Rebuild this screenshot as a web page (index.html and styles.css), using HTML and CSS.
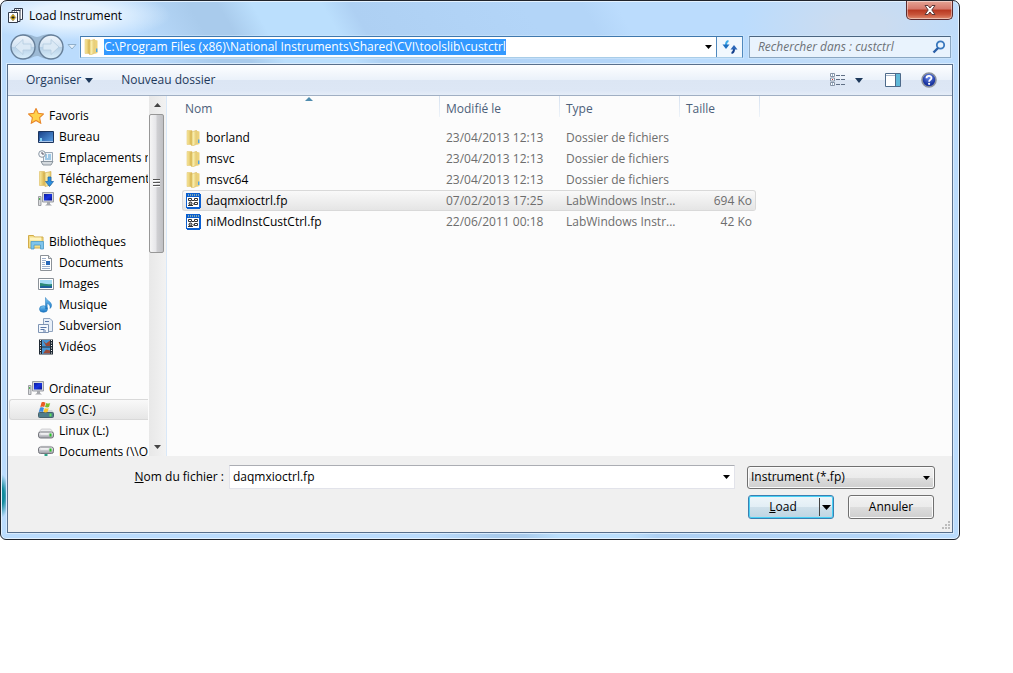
FILE: index.html
```html
<!DOCTYPE html>
<html lang="fr">
<head>
<meta charset="utf-8">
<title>Load Instrument</title>
<link rel="stylesheet" href="styles.css">
</head>
<body>
<svg class="defs" aria-hidden="true">
  <defs>
    <linearGradient id="g-gold" x1="0" x2="1"><stop offset="0" stop-color="#f8eaa0"/><stop offset="1" stop-color="#d8b24a"/></linearGradient>
    <linearGradient id="g-gold2" x1="0" x2="1"><stop offset="0" stop-color="#d9b550"/><stop offset=".4" stop-color="#f9efb0"/><stop offset="1" stop-color="#e5c768"/></linearGradient>
    <linearGradient id="g-screen" x1="0" x2="1" y2="1"><stop offset="0" stop-color="#0a1a9c"/><stop offset=".5" stop-color="#1a35e0"/><stop offset="1" stop-color="#0c1690"/></linearGradient>
    <linearGradient id="g-desk" x1="0" x2="1" y2="1"><stop offset="0" stop-color="#173f86"/><stop offset="1" stop-color="#5aa0e6"/></linearGradient>
    <linearGradient id="g-blue" x1="0" x2="0" y2="1"><stop offset="0" stop-color="#7cc8f4"/><stop offset="1" stop-color="#1673c4"/></linearGradient>
    <linearGradient id="g-drive" x1="0" x2="0" y2="1"><stop offset="0" stop-color="#f6f6f8"/><stop offset="1" stop-color="#9b9ca4"/></linearGradient>
    <linearGradient id="g-orb" x1="0" x2="0" y2="1"><stop offset="0" stop-color="#f0f6fc"/><stop offset=".48" stop-color="#d3e3f2"/><stop offset=".5" stop-color="#b5cfe6"/><stop offset="1" stop-color="#dcf0fc"/></linearGradient>
    <radialGradient id="g-help" cy=".3"><stop offset="0" stop-color="#6c8cf0"/><stop offset="1" stop-color="#1a35a0"/></radialGradient>
    <symbol id="i-folder" viewBox="0 0 16 16">
      <path d="M2 .5h5v14H2z" fill="url(#g-gold)" stroke="#e6cb78" stroke-width=".6"/>
      <path d="M6 2.200L11.500.300v14L7.500 16 6 15z" fill="url(#g-gold2)" stroke="#d3b050" stroke-width=".5"/>
      <path d="M11.500.8l3 .7v12.500l-3 1z" fill="#ecd27a"/><path d="M13.700 9.500v3.500" stroke="#4fa4e4" stroke-width="1.400"/>
    </symbol>
    <symbol id="i-fp" viewBox="0 0 16 16">
      <path d="M1 0h14v1h1v14h-1v1H2v-1H1z" fill="#0b5fd0"/><path d="M2 4h12v10H2z" fill="#fff"/>
      <path d="M3 2h11" stroke="#f8f090" stroke-dasharray="1 1"/>
      <path d="M3.500 5.500h3v2h-3zM9.500 5.500h3v2h-3zM9.500 9.500h3v2h-3z" fill="#fff" stroke="#333"/><circle cx="5.500" cy="10.500" r="1.500" fill="#aaa" stroke="#222"/><path d="M3 12.500h5M7 7.500h2M8 11h2" stroke="#333"/>
    </symbol>
    <symbol id="i-pc" viewBox="0 0 16 16">
      <path d="M4.500.5h11v9.500h-11z" fill="#d6d8dc" stroke="#9a9da4"/><path d="M6 2h8v6.500H6z" fill="url(#g-screen)"/>
      <path d="M9 10h3v2l2 1.500H7L9 12z" fill="#a5a7ac"/><path d="M.5 4.500h2.500v9H.5z" fill="#d8dadd" stroke="#8b8d92" stroke-width=".8"/><path d="M1.700 6v2" stroke="#37a537"/>
    </symbol>
    <symbol id="i-drive" viewBox="0 0 16 16">
      <path d="M3.500 6h9l3 3.500H.5z" fill="#ececee" stroke="#b5b5ba" stroke-width=".6"/><rect x=".5" y="9" width="15" height="6" rx="2" fill="url(#g-drive)" stroke="#77787f"/><path d="M2.500 11h8" stroke="#fff"/><path d="M12.500 10.500v3" stroke="#27c427" stroke-width="2"/>
    </symbol>
  </defs>
</svg>

<main class="window">
  <header class="titlebar">
    <svg class="icon" viewBox="0 0 16 16"><path d="M6.500.5h8v11h-8z" fill="#fff" stroke="#333c4c"/><path d="M4 2.500h8v11H4z" fill="#fff" stroke="#333c4c"/><path d="M6 4h4M8 2h5" stroke="#445" stroke-dasharray="1 1"/><path d="M.5 4.500h9v10h-9z" fill="#fff" stroke="#333c4c"/><path d="M5 6l2.800 3.500L5 13 2.200 9.500z" fill="#e8b400" stroke="#777" stroke-width=".6"/><path d="M5 8v3M3.500 9.500h3" stroke="#222"/></svg>
    <h1>Load Instrument</h1>
    <button class="close" aria-label="Fermer"><svg width="12" height="10" viewBox="0 0 12 10"><path d="M1 .5h3L6 3 8 .5h3L7.800 5 11 9.500H8L6 7 4 9.500H1L4.200 5z" fill="#fff" stroke="#5a3a3a"/></svg></button>
  </header>

  <nav class="address-row" aria-label="Navigation">
    <div class="travel">
      <svg width="56" height="28" viewBox="0 0 56 28"><path d="M13 1.500C22 .5 24 4 28 4S34 .5 43 1.500v24C34 27 32 23 28 23s-6 4-15 3z" fill="#9cb9d4"/><g fill="url(#g-orb)" stroke="#667f99" stroke-width="1.400"><circle cx="14" cy="14" r="12"/><circle cx="42" cy="14" r="12"/></g><path d="M14 6.500L6 14l8 7.500v-4.500h8v-6h-8zM42 6.500l8 7.500-8 7.500v-4.500h-8v-6h8z" fill="#dbe9f5" stroke="#b4cbe0" stroke-width=".8"/></svg>
      <svg width="10" height="6" viewBox="0 0 10 6"><path d="M1 .5h8L5 5z" fill="#e3f0fb" stroke="#8fafcb"/></svg>
    </div>
    <div class="address">
      <svg class="icon"><use href="#i-folder"/></svg>
      <input id="path" aria-label="Adresse" value="C:\Program Files (x86)\National Instruments\Shared\CVI\toolslib\custctrl" spellcheck="false">
      <button class="drop" aria-label="Emplacements précédents"><svg width="7" height="4" viewBox="0 0 7 4"><path d="M0 0h7L3.500 4z"/></svg></button>
      <button class="refresh" aria-label="Actualiser"><svg width="16" height="14" viewBox="0 0 16 14"><path d="M6.500 1C4.200 1.200 4 3 4 5" fill="none" stroke="#38a9e8" stroke-width="2"/><path d="M.5 4.500h7L4 9z" fill="#1d6fc0"/><path d="M9.500 13c2.300-.2 2.500-2 2.500-4" fill="none" stroke="#123f8c" stroke-width="2"/><path d="M8.500 9.500h7L12 5z" fill="#2a66b8"/></svg></button>
    </div>
    <div class="search">
      <input type="text" aria-label="Rechercher" placeholder="Rechercher dans : custctrl">
      <svg width="14" height="14" viewBox="0 0 14 14"><circle cx="8.500" cy="5" r="3.700" fill="#eaf4fd" stroke="#3a78bd" stroke-width="1.800"/><path d="M6 8l-4.500 4.500" stroke="#2a5fa8" stroke-width="2.400"/></svg>
    </div>
  </nav>

  <section class="client">
    <div class="toolbar">
      <button>Organiser <svg width="8" height="5" viewBox="0 0 8 5"><path d="M0 0h8L4 5z" fill="#1e395b"/></svg></button>
      <button>Nouveau dossier</button>
      <button class="view" aria-label="Affichage"><svg width="16" height="14" viewBox="0 0 16 14"><path d="M.5.5h4v3h-4zM.5 5h4v3h-4zM.5 9.500h4v3h-4z" fill="#fff" stroke="#8593a5"/><path d="M2 2h1M2 11h1" stroke="#34689c"/><path d="M2 6.500h1" stroke="#c33"/><path d="M6 2.500h4m1 0h4M6 6.500h4m1 0h4M6 11.500h4m1 0h4" stroke="#5f6f85"/></svg><svg width="8" height="5" viewBox="0 0 8 5"><path d="M0 0h8L4 5z" fill="#1e395b"/></svg></button>
      <button aria-label="Volet de visualisation"><svg width="16" height="14" viewBox="0 0 16 14"><path d="M.5.500h15v13H.5z" fill="#fff" stroke="#4d6a8a"/><path d="M11 1h4v12h-4z" fill="#5fb8d8"/><path d="M1 2.500h9" stroke="#a8b8cc"/><path d="M10.500 1v12" stroke="#4d6a8a"/></svg></button>
      <button class="help" aria-label="Aide"><svg width="16" height="16" viewBox="0 0 16 16"><circle cx="8" cy="8" r="7" fill="url(#g-help)" stroke="#8c929c" stroke-width="1.600"/><path d="M5.500 6.300C5.500 3.200 10.500 3.200 10.500 6c0 2-2.400 1.700-2.400 3.800" fill="none" stroke="#fff" stroke-width="1.800"/><circle cx="8.100" cy="11.800" r="1.100" fill="#fff"/></svg></button>
    </div>

    <div class="panes">
      <ul class="tree">
        <li><svg class="icon" viewBox="0 0 16 16"><path d="M8 .6l2.200 4.700 5.300.7-3.900 3.700 1.100 5.500L8 12.500l-4.700 2.700 1.100-5.500L.5 6l5.300-.7z" fill="#ffd24a" stroke="#e8862a" stroke-width="1.100"/></svg>Favoris</li>
        <li class="sub"><svg class="icon" viewBox="0 0 16 16"><path d="M.5 2.500h15v11H.5z" fill="url(#g-desk)" stroke="#1c355e"/><path d="M1 12.500h14" stroke="#a9c6ea"/><path d="M2 9h2v3H2z" fill="#7fd0f5"/></svg>Bureau</li>
        <li class="sub"><svg class="icon" viewBox="0 0 16 16"><path d="M5.500 2.500h9v9h-9z" fill="#eef3f8" stroke="#9aa7b4"/><path d="M7 5h2m1 0h3M7 7h2m1 0h3M7 9h6" stroke="#4c9bd2"/><path d="M3 11.500h12l-2 3.500H5z" fill="#d5dade" stroke="#8b959e"/><circle cx="4" cy="4" r="3.300" fill="#f6f8fa" stroke="#8b98a5"/><path d="M4 2v2h2" fill="none" stroke="#556"/></svg>Emplacements récents</li>
        <li class="sub"><svg class="icon" viewBox="0 0 16 16"><path d="M1.500.5h5v14h-5z" fill="url(#g-gold)" stroke="#dcbb5d" stroke-width=".6"/><path d="M6 2l7-1.500v13.500l-6 1.500z" fill="url(#g-gold2)" stroke="#cda847" stroke-width=".6"/><path d="M10 6h3v4.500h2.500l-4 5-4-5H10z" fill="#2e90e0" stroke="#1762a8" stroke-width=".7"/></svg>Téléchargements</li>
        <li class="sub"><svg class="icon"><use href="#i-pc"/></svg>QSR-2000</li>
        <li class="gap"><svg class="icon" viewBox="0 0 16 16"><path d="M.5 1.500h5l1 1.500h8.500v11H.5z" fill="#f2dc86" stroke="#d2ac4a"/><path d="M2 3.500h11v3H2z" fill="#fff4c0"/><path d="M3 7.500h12.500v7.500h-3v-4H6v4H3z" fill="#7ec4ec" stroke="#4a9bcc" stroke-width=".8"/></svg>Bibliothèques</li>
        <li class="sub"><svg class="icon" viewBox="0 0 16 16"><path d="M2.500.5h8l3 3v12h-11z" fill="#fff" stroke="#8c9298"/><path d="M10.500.5v3h3" fill="#e5e8ea" stroke="#8c9298"/><path d="M4 3.500h4M4 5.500h4M4 7.500h3M4 9.500h3M4 11.500h8M4 13.500h8" stroke="#9db0cc"/><path d="M8 6h4v4H8z" fill="#2868b8"/></svg>Documents</li>
        <li class="sub"><svg class="icon" viewBox="0 0 16 16"><path d="M.5 2.500h15v11H.5z" fill="#fff" stroke="#8a9198"/><path d="M2 4h12v8H2z" fill="#a5dcf5"/><path d="M2 7c4 0 6 2 12 1v4H2z" fill="#2b8a76"/><path d="M2 10.500c4-1 8 0 12-.5v2H2z" fill="#1d5f9c"/></svg>Images</li>
        <li class="sub"><svg class="icon" viewBox="0 0 16 16"><ellipse cx="5.500" cy="12" rx="4" ry="3.300" fill="url(#g-blue)" stroke="#2479bb" stroke-width=".6"/><path d="M7.500 12V.5c1 3 5.500 4 6 7 .3 2-.5 3-1.500 4 .5-3-1-4.500-2.800-5.200V12z" fill="url(#g-blue)" stroke="#2479bb" stroke-width=".5"/></svg>Musique</li>
        <li class="sub"><svg class="icon" viewBox="0 0 16 16"><path d="M5.500.5h6.500l2.500 2.500v10.500h-9z" fill="#e8eff8" stroke="#8fa3be"/><path d="M.5 6.500h10v8H.5z" fill="#f4f8fd" stroke="#7e94b4"/><path d="M2.500 9.500h6M2.500 11.500h4M5 13h3M7 3.500h4" stroke="#5876a8"/></svg>Subversion</li>
        <li class="sub"><svg class="icon" viewBox="0 0 16 16"><path d="M1 .5h14v15H1z" fill="#202a34"/><path d="M4 1h8v6.500H4zM4 8.500h8V15H4z" fill="#4796d4"/><path d="M5 1.500l3 3 4-3v5.500H8zM5 14.500l3-4 4 1v3z" fill="#9a4a38"/><path d="M2.500 1v14M13.500 1v14" stroke="#fff" stroke-dasharray="1 1.500"/></svg>Vidéos</li>
        <li class="gap"><svg class="icon"><use href="#i-pc"/></svg>Ordinateur</li>
        <li class="sub current"><svg class="icon" viewBox="0 0 16 16"><path d="M2 8h12l2 3H0z" fill="#cfd6da"/><rect x=".5" y="10.500" width="15" height="5" rx="1" fill="#4f7d8a" stroke="#46616c"/><path d="M12.500 11.500v3" stroke="#5de25d" stroke-width="2"/><path d="M3.500.5c2-1 3 0 4 .3L6.300 5c-1-.5-2-1-4 0z" fill="#ea5a24"/><path d="M8.200 1c1.500.8 2.500.6 4 0L11 5c-1.500.7-2.500.5-4 0z" fill="#7cbc2c"/><path d="M2 5.700c2-1 3 0 4 .3L4.800 10c-1-.5-2-1-4 0z" fill="#3b8be0"/><path d="M6.800 6c1.500.8 2.500.6 4 0L9.500 10c-1.500.7-2.500.5-4 0z" fill="#fbc52c"/></svg>OS (C:)</li>
        <li class="sub"><svg class="icon"><use href="#i-drive"/></svg>Linux (L:)</li>
        <li class="sub"><svg class="icon" viewBox="0 0 16 16"><path d="M3.500 1.500h9l3 2.500H.5z" fill="#ececee"/><rect x=".5" y="3" width="15" height="6.500" rx="2" fill="url(#g-drive)" stroke="#77787f"/><path d="M2.500 5h8" stroke="#fff"/><path d="M12.500 4.500v3" stroke="#27c427" stroke-width="2"/><path d="M8 10v4M2 14h12" stroke="#2da086" stroke-width="3"/></svg>Documents (\\OSR)</li>
      </ul>
      <div class="scrollbar" aria-hidden="true">
        <svg width="7" height="4" viewBox="0 0 7 4"><path d="M0 4h7L3.500 0z" fill="#444"/></svg>
        <div class="track"><div class="thumb"><i></i></div></div>
        <svg width="7" height="4" viewBox="0 0 7 4"><path d="M0 0h7L3.500 4z" fill="#444"/></svg>
      </div>
      <div class="files">
        <svg class="sort" width="8" height="4" viewBox="0 0 8 4"><path d="M0 4h8L4 0z" fill="#4f8cae"/></svg>
        <table>
          <colgroup><col class="c-name"><col class="c-date"><col class="c-type"><col class="c-size"></colgroup>
          <thead><tr><th>Nom</th><th>Modifié le</th><th>Type</th><th>Taille</th></tr></thead>
          <tbody>
            <tr><td><span class="file"><svg class="icon"><use href="#i-folder"/></svg>borland</span></td><td>23/04/2013 12:13</td><td>Dossier de fichiers</td><td></td></tr>
            <tr><td><span class="file"><svg class="icon"><use href="#i-folder"/></svg>msvc</span></td><td>23/04/2013 12:13</td><td>Dossier de fichiers</td><td></td></tr>
            <tr><td><span class="file"><svg class="icon"><use href="#i-folder"/></svg>msvc64</span></td><td>23/04/2013 12:13</td><td>Dossier de fichiers</td><td></td></tr>
            <tr class="selected"><td><span class="file"><svg class="icon"><use href="#i-fp"/></svg>daqmxioctrl.fp</span></td><td>07/02/2013 17:25</td><td>LabWindows Instr...</td><td>694 Ko</td></tr>
            <tr><td><span class="file"><svg class="icon"><use href="#i-fp"/></svg>niModInstCustCtrl.fp</span></td><td>22/06/2011 00:18</td><td>LabWindows Instr...</td><td>42 Ko</td></tr>
          </tbody>
        </table>
      </div>
    </div>

    <footer class="footer">
      <div class="fields">
        <label for="filename"><u>N</u>om du fichier :</label>
        <div class="combo">
          <input id="filename" value="daqmxioctrl.fp" spellcheck="false">
          <button class="drop" aria-label="Fichiers récents"><svg width="7" height="4" viewBox="0 0 7 4"><path d="M0 0h7L3.500 4z"/></svg></button>
        </div>
        <div class="filter">
          <select aria-label="Type de fichier"><option>Instrument (*.fp)</option></select>
          <svg width="7" height="4" viewBox="0 0 7 4"><path d="M0 0h7L3.500 4z"/></svg>
        </div>
      </div>
      <div class="actions">
        <div class="split">
          <button class="load"><span><u>L</u>oad</span></button>
          <button class="more" aria-label="Autres options"><svg width="9" height="5" viewBox="0 0 9 5"><path d="M0 0h9L4.500 5z"/></svg></button>
        </div>
        <button class="cancel">Annuler</button>
      </div>
      <svg class="grip" width="9" height="9" viewBox="0 0 9 9"><path d="M7 1h2M4 4h2m1 0h2M1 7h2m1 0h2m1 0h2" stroke="#bdbdbd" stroke-width="2"/></svg>
    </footer>
  </section>
</main>
<script src="script.js"></script>
</body>
</html>
```
FILE: styles.css
```css
* { box-sizing: border-box; }

body {
  margin: 0;
  padding-right: 53px;
  height: 100vh;
  background: #fff;
  color: #000;
  font: 12px/16px "Segoe UI", "Open Sans", "Noto Sans", sans-serif;
}

button, input, select { font: inherit; color: inherit; margin: 0; padding: 0; border: 0; background: none; outline: none; }
button { display: inline-flex; align-items: center; justify-content: center; }
svg { display: block; flex: none; }
.defs { position: absolute; width: 0; height: 0; }
.icon { width: 16px; height: 16px; }

.window {
  display: flex;
  flex-direction: column;
  height: calc(100vh - 133px);
  padding: 0 6px 6px;
  border: 1px solid #20242c;
  border-radius: 7px 7px 6px 6px;
  box-shadow: inset 0 0 0 1px #e4f2ff;
  background:
    radial-gradient(ellipse 8px 22px at 0 92%, #128a9c 40%, transparent),
    radial-gradient(ellipse 100px 26px at 70px 14px, #e6f3ff 40%, transparent),
    radial-gradient(ellipse 120px 60px at 860px 24px, #cbdcf0 20%, transparent),
    linear-gradient(60deg, #bbdcfd 370px, #a9cbec 430px, #a9cbec 455px, #bbdffd 485px, #bbdffd 545px, #aed0f3 570px, #b3d5f8 720px, #b3d5f8 770px, #bbdcfd 800px);
}

.titlebar { display: flex; align-items: center; gap: 5px; height: 29px; padding-left: 1px; }
.titlebar h1 { flex: 1; margin: 0; font-size: 12px; font-weight: 400; }
.close {
  align-self: flex-start;
  width: 47px;
  height: 19px;
  border: 1px solid #5a2b2e;
  border-top: 0;
  border-radius: 0 0 5px 5px;
  box-shadow: inset 0 0 0 1px #ffffff70;
  background: linear-gradient(#e5a494, #d5776a 45%, #b83720 50%, #c8543a 75%, #e08c70);
}

.address-row { display: flex; align-items: center; height: 34px; padding: 0 2px; }
.travel { display: flex; align-items: center; gap: 2px; margin-right: 3px; }
.address, .search {
  display: flex;
  align-items: center;
  height: 22px;
  border: 1px solid #8ba7c2;
  border-top-color: #4b6580;
  box-shadow: 0 0 0 1px #d6eafb80;
}
.address { flex: 1; padding-left: 2px; background: #fff; border-color: #3f78ad #5089be #a9cde8; }
.address input { flex: 1; height: 16px; margin-left: 5px; min-width: 0; }
.address input::selection { background: #3399ff; color: #fff; }
.drop { width: 16px; height: 20px; }
.refresh { width: 26px; height: 20px; border-left: 1px solid #5089be; background: #f1f8fe; }
.search { width: 202px; margin-left: 6px; padding: 0 4px 0 8px; background: #e9f3fd; }
.search input { flex: 1; min-width: 0; font-style: italic; }
.search input::placeholder { color: #6d7278; opacity: 1; }

.client { flex: 1; min-height: 0; display: flex; flex-direction: column; border: 1px solid #586f8c; background: #fcfcfc; box-shadow: 0 0 0 1px #d8ebfd; }

.toolbar {
  display: flex;
  align-items: center;
  height: 31px;
  padding: 0 15px 0 18px;
  border-bottom: 1px solid #a0afc3;
  background: linear-gradient(#fdfeff, #eaf1fa 50%, #dce6f4 51%, #dde7f5 85%, #e5edf8);
  color: #1e395b;
}
.toolbar button { gap: 4px; }
.toolbar button + button { margin-left: 28px; }
.toolbar .view { margin-left: auto; gap: 9px; }
.toolbar .view + button { margin-left: 22px; }
.toolbar .help { margin-left: 20px; }

.panes { flex: 1; min-height: 0; display: flex; overflow: hidden; }

.tree { width: 140px; margin: 0; padding: 9px 0 0 1px; list-style: none; overflow: hidden; }
.tree li { display: flex; align-items: center; gap: 5px; height: 21px; padding-left: 18px; border: 1px solid transparent; border-right: 0; white-space: nowrap; }
.tree .sub { padding-left: 28px; }
.tree .gap { margin-top: 21px; }
.tree .current { border-color: #d9d9d9; border-radius: 3px 0 0 3px; background: linear-gradient(#f9f9f9, #e6e6e6); }

.scrollbar { display: flex; flex-direction: column; align-items: center; width: 17px; margin-left: 1px; padding: 7px 0; background: linear-gradient(90deg, #e8e8e8, #f2f2f2); }
.track { flex: 1; align-self: stretch; padding: 7px 2px 8px 0; }
.thumb { display: flex; align-items: center; justify-content: center; height: 43%; border: 1px solid #979797; border-radius: 2px; background: linear-gradient(90deg, #f5f5f5, #e6e6e9 45%, #cfcfd2 55%, #bfc0c4); }
.thumb i { width: 7px; height: 8px; background: repeating-linear-gradient(#555 0 1px, #fff 1px 2px, transparent 2px 3px); }

.files { position: relative; flex: 1; min-width: 0; padding-left: 15px; border-left: 1px solid #d9e8f8; }
.sort { position: absolute; left: 138px; top: 1px; }
table { border-collapse: separate; border-spacing: 0; table-layout: fixed; width: 574px; }
.c-name { width: 258px; }
.c-date, .c-type { width: 120px; }
.c-size { width: 76px; }
th { position: relative; height: 25px; padding: 0 3px; text-align: left; font-weight: 400; color: #4c607a; }
th:not(:first-child) { padding-left: 6px; }
th::after { content: ""; position: absolute; right: 0; top: 0; width: 1px; height: 21px; background: linear-gradient(#d5e1f0, #eef3f9); }
th:last-child::after { right: -4px; }
tbody::before { content: ""; display: block; height: 6px; }
td { height: 21px; padding: 0 6px; border: solid transparent; border-width: 1px 0; color: #6d6d6d; white-space: nowrap; }
td:first-child { padding-left: 2px; border-left-width: 1px; color: #000; }
td:last-child { padding-right: 3px; border-right-width: 1px; text-align: right; }
.selected td { border-color: #d9d9d9; background: linear-gradient(#f9f9f9, #e5e5e5); background-clip: padding-box; }
.selected td:first-child { border-radius: 3px 0 0 3px; }
.selected td:last-child { border-radius: 0 3px 3px 0; }
.file { display: flex; align-items: center; gap: 5px; height: 19px; }

.footer { position: relative; padding: 9px 17px 13px 0; background: #f0f0f0; }
.fields { display: flex; align-items: center; }
.fields label { width: 216px; text-align: right; }
.combo { flex: 1; display: flex; height: 24px; margin: 0 12px 0 5px; border: 1px solid #e2e3ea; border-top-color: #abadb3; background: #fff; }
.combo input { flex: 1; min-width: 0; padding-left: 3px; }
.combo .drop { height: 22px; }
.filter { position: relative; width: 188px; }
.filter select { appearance: none; width: 100%; height: 23px; padding-left: 3px; border: 1px solid #707070; border-radius: 3px; box-shadow: inset 0 0 0 1px #fbfbfb; background: linear-gradient(#f2f2f2, #ebebeb 50%, #dddddd 51%, #cfcfcf); }
.filter svg { position: absolute; right: 5px; top: 10px; pointer-events: none; }

.actions { display: flex; justify-content: flex-end; gap: 14px; margin: 6px 1px 0 0; }
.split { display: flex; width: 86px; height: 24px; border: 1px solid #3c7fb1; border-radius: 3px; box-shadow: inset 0 0 0 1px #48d1f5; background: linear-gradient(#eef6fa, #e2eef5 50%, #cfe0ea 51%, #bed5e3); }
.load { flex: 1; }
.more { width: 16px; }
.more::before { content: ""; width: 1px; height: 18px; margin-right: 2px; background: #444; }
.cancel { width: 86px; height: 24px; border: 1px solid #707070; border-radius: 3px; box-shadow: inset 0 0 0 1px #fbfbfb; background: linear-gradient(#f2f2f2, #ebebeb 50%, #dddddd 51%, #cfcfcf); }
.grip { position: absolute; right: 2px; bottom: 2px; }
```
FILE: script.js
```js
const path = document.getElementById("path");
path.focus();
path.select();
```
